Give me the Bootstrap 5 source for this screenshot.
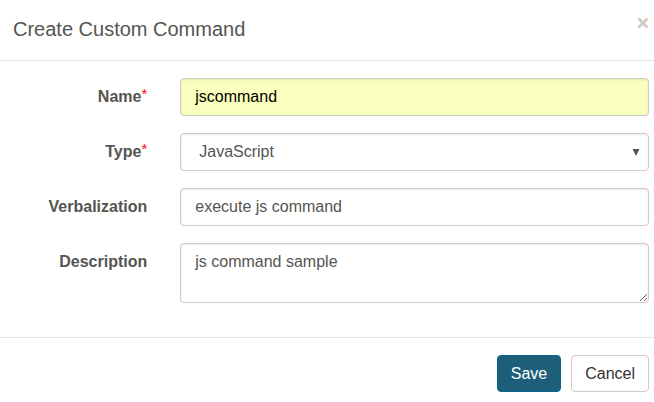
<!DOCTYPE html>
<html lang="en">
<head>
<meta charset="utf-8">
<meta name="viewport" content="width=device-width, initial-scale=1">
<title>Create Custom Command</title>
<link href="https://cdn.jsdelivr.net/npm/bootstrap@5.3.0/dist/css/bootstrap.min.css" rel="stylesheet">
<style>
  body { font: 16px/24px "Liberation Sans", Arial, sans-serif; color: #555551; background: #fff; }
  .dialog-head { padding: 13px 5px 15px 13px; border-bottom: 1px solid #e5e5e5; }
  .dialog-title { font-size: 20px; line-height: 32px; font-weight: 400; color: #555551; }
  .close-btn { border: 0; padding: 0; background: none; line-height: 0; margin-bottom: 12px; }
  .dialog-body { padding: 17px 5px 34px 0; gap: 17px; }
  .label-col { padding: 7px 15px 7px 0; font-weight: 700; text-align: right; }
  .required { color: #f00; font-size: 15px; font-weight: 400; line-height: 0; vertical-align: 3px; }
  .field-col { padding: 0 0 0 18px; }
  .field-col .form-control, .field-col .form-select {
    border: 1px solid #cccbc4; border-radius: 4px; padding: 6px 14px; font-size: 16px; line-height: 24px;
    color: #555551; box-shadow: inset 0 1px 2px rgba(0, 0, 0, .09); height: 38px;
  }
  .field-col .form-select {
    padding: 6px 30px 6px 18px;
    background-image: url("data:image/svg+xml,%3Csvg xmlns='http://www.w3.org/2000/svg' viewBox='0 0 8 7'%3E%3Cpath d='M.5 0h7L4 7z' fill='%23555551'/%3E%3C/svg%3E");
    background-size: 8px 7px; background-position: right 8px center;
  }
  .field-col textarea.form-control { height: 60px; min-height: 60px; display: block; }
  .field-col .form-control.autofilled { background: #faffbd; color: #000; }
  .dialog-foot { border-top: 1px solid #e5e5e5; padding: 17px 5px 10px 0; gap: 10px; }
  .dialog-foot .btn { font-size: 16px; line-height: 23px; padding: 6px 13px; border-radius: 4px; }
  .btn-save, .btn-save:hover { background: #1d5e78; border-color: #0a6590; color: #fff; }
  .btn-cancel, .btn-cancel:hover { background: #fff; border-color: #cccbc4; color: #333; }
</style>
</head>
<body>
<main>
  <header class="dialog-head d-flex align-items-center justify-content-between">
    <h1 class="dialog-title mb-0">Create Custom Command</h1>
    <button type="button" class="close-btn" aria-label="Close">
      <svg width="12" height="12" viewBox="0 0 12 12" fill="none" stroke="#cccbc4" stroke-width="2.8"><path d="M1.5 1.5l9 9M10.5 1.5l-9 9"/></svg>
    </button>
  </header>
  <form>
    <div class="dialog-body d-flex flex-column">
      <div class="row g-0">
        <label for="name" class="col-3 label-col">Name<span class="required">*</span></label>
        <div class="col-9 field-col"><input id="name" type="text" class="form-control autofilled" value="jscommand"></div>
      </div>
      <div class="row g-0">
        <label for="type" class="col-3 label-col">Type<span class="required">*</span></label>
        <div class="col-9 field-col"><select id="type" class="form-select"><option>JavaScript</option></select></div>
      </div>
      <div class="row g-0">
        <label for="verbalization" class="col-3 label-col">Verbalization</label>
        <div class="col-9 field-col"><input id="verbalization" type="text" class="form-control" value="execute js command"></div>
      </div>
      <div class="row g-0">
        <label for="description" class="col-3 label-col">Description</label>
        <div class="col-9 field-col"><textarea id="description" class="form-control">js command sample</textarea></div>
      </div>
    </div>
    <footer class="dialog-foot d-flex justify-content-end">
      <button type="button" class="btn btn-save">Save</button>
      <button type="button" class="btn btn-cancel">Cancel</button>
    </footer>
  </form>
</main>
<script src="https://cdn.jsdelivr.net/npm/bootstrap@5.3.0/dist/js/bootstrap.bundle.min.js"></script>
</body>
</html>
